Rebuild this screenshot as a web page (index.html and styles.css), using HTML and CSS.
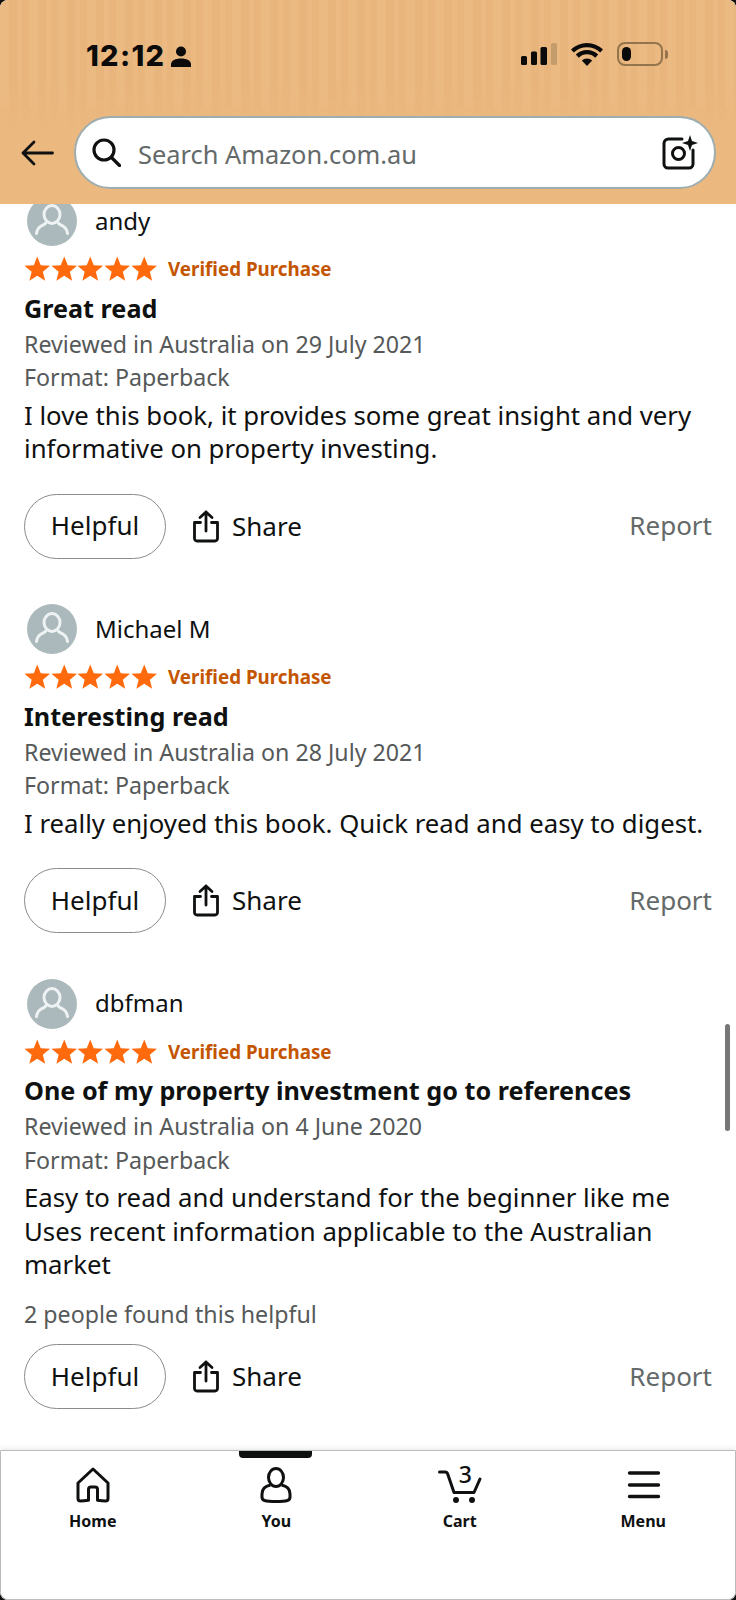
FILE: index.html
```html
<!DOCTYPE html>
<html lang="en">
<head>
    <meta charset="UTF-8">
    <meta name="viewport" content="width=device-width, initial-scale=1.0">
    <title>Customer reviews</title>
    <link rel="stylesheet" href="styles.css">
</head>
<body>
    <svg class="defs" width="0" height="0">
        <symbol id="star" viewBox="0 0 26 26">
            <path d="M13 .5l3.500 8.700 9.300.6-7.200 5.900 2.300 9-7.900-4.900-7.900 4.900 2.300-9L.2 9.800l9.300-.6z"/>
        </symbol>
        <symbol id="avatar" viewBox="0 0 50 50">
            <circle cx="25" cy="25" r="25" fill="#abb9bc"/>
            <g fill="none" stroke="#eef2f2" stroke-width="3" stroke-linecap="round">
                <ellipse cx="25" cy="18.5" rx="8" ry="9"/>
                <path d="M19.500 26c-1 2.500-3.500 3-6 4.500-2.500 1.500-3.500 4-4 7M30.500 26c1 2.500 3.500 3 6 4.500 2.500 1.500 3.500 4 4 7"/>
            </g>
        </symbol>
        <symbol id="share" viewBox="0 0 28 33">
            <g fill="none" stroke="#0f1111" stroke-width="2.800" stroke-linecap="round" stroke-linejoin="round">
                <path d="M14 21V2M8 7.500L14 2l6 5.500"/>
                <path d="M8.500 12.500H2.500v16a2.500 2.500 0 0 0 2.500 2.500h18a2.500 2.500 0 0 0 2.500-2.500v-16h-6"/>
            </g>
        </symbol>
    </svg>

    <div class="phone">
        <header class="top">
            <div class="status">
                <div class="clock">
                    <span class="time">12:12</span>
                    <svg class="person" viewBox="0 0 20 21"><circle cx="10" cy="5.500" r="5"/><path d="M0 21v-2.500C0 14.500 4.500 12.500 10 12.500s10 2 10 6V21z"/></svg>
                </div>
                <div class="indicators">
                    <svg class="signal" viewBox="0 0 36 22">
                        <rect x="0" y="13" width="6" height="9" rx="1.500"/>
                        <rect x="10" y="8.500" width="6" height="13.500" rx="1.500"/>
                        <rect x="19.500" y="4" width="6.500" height="18" rx="1.500"/>
                        <rect class="off" x="30" y="0" width="6" height="22" rx="1.500"/>
                    </svg>
                    <svg class="wifi" viewBox="0 0 32 23">
                        <path d="M16 23l-5.200-5.400a7.400 7.400 0 0 1 10.400 0z"/>
                        <path d="M7.800 14.700l-3-3.100a16 16 0 0 1 22.400 0l-3 3.100a11.700 11.700 0 0 0-16.400 0z"/>
                        <path d="M2.800 9.500L0 6.600a23 23 0 0 1 32 0l-2.800 2.900a19 19 0 0 0-26.400 0z"/>
                    </svg>
                    <div class="battery"><span class="charge"></span></div>
                    <span class="nub"></span>
                </div>
            </div>
            <div class="searchrow">
                <svg class="back" viewBox="0 0 33 26" fill="none" stroke="#0f1111" stroke-width="2.800" stroke-linecap="round" stroke-linejoin="round">
                    <path d="M31.500 13H2M13 2L2 13l11 11"/>
                </svg>
                <div class="searchbar">
                    <svg class="lens" viewBox="0 0 29 29" fill="none" stroke="#0f1111" stroke-width="3.200" stroke-linecap="round">
                        <circle cx="12" cy="12" r="10"/>
                        <path d="M19.500 19.500l8 8"/>
                    </svg>
                    <span class="placeholder">Search Amazon.com.au</span>
                    <svg class="lenscam" viewBox="0 0 36 35">
                        <path d="M20 4H7a4.500 4.500 0 0 0-5 4.500V29a4 4 0 0 0 4 4h21a4 4 0 0 0 4-4V15" fill="none" stroke="#0f1111" stroke-width="3" stroke-linecap="round"/>
                        <circle cx="16.500" cy="18.500" r="6" fill="none" stroke="#0f1111" stroke-width="3"/>
                        <path d="M28 0l2 6 6 2-6 2-2 6-2-6-6-2 6-2z" fill="#0f1111"/>
                    </svg>
                </div>
            </div>
        </header>

        <main class="reviews">
            <article class="review">
                <div class="reviewer">
                    <svg class="avatar"><use href="#avatar"/></svg>
                    <span class="name">andy</span>
                </div>
                <div class="rating">
                    <div class="stars">
                        <svg><use href="#star"/></svg><svg><use href="#star"/></svg><svg><use href="#star"/></svg><svg><use href="#star"/></svg><svg><use href="#star"/></svg>
                    </div>
                    <span class="verified">Verified Purchase</span>
                </div>
                <h3 class="title">Great read</h3>
                <p class="meta">Reviewed in Australia on 29 July 2021</p>
                <p class="meta">Format: Paperback</p>
                <p class="body">I love this book, it provides some great insight and very informative on property investing.</p>
                <div class="actions">
                    <button class="helpful">Helpful</button>
                    <div class="share"><svg><use href="#share"/></svg><span>Share</span></div>
                    <span class="report">Report</span>
                </div>
            </article>

            <article class="review">
                <div class="reviewer">
                    <svg class="avatar"><use href="#avatar"/></svg>
                    <span class="name">Michael M</span>
                </div>
                <div class="rating">
                    <div class="stars">
                        <svg><use href="#star"/></svg><svg><use href="#star"/></svg><svg><use href="#star"/></svg><svg><use href="#star"/></svg><svg><use href="#star"/></svg>
                    </div>
                    <span class="verified">Verified Purchase</span>
                </div>
                <h3 class="title">Interesting read</h3>
                <p class="meta">Reviewed in Australia on 28 July 2021</p>
                <p class="meta">Format: Paperback</p>
                <p class="body">I really enjoyed this book. Quick read and easy to digest.</p>
                <div class="actions">
                    <button class="helpful">Helpful</button>
                    <div class="share"><svg><use href="#share"/></svg><span>Share</span></div>
                    <span class="report">Report</span>
                </div>
            </article>

            <article class="review">
                <div class="reviewer">
                    <svg class="avatar"><use href="#avatar"/></svg>
                    <span class="name">dbfman</span>
                </div>
                <div class="rating">
                    <div class="stars">
                        <svg><use href="#star"/></svg><svg><use href="#star"/></svg><svg><use href="#star"/></svg><svg><use href="#star"/></svg><svg><use href="#star"/></svg>
                    </div>
                    <span class="verified">Verified Purchase</span>
                </div>
                <h3 class="title">One of my property investment go to references</h3>
                <p class="meta">Reviewed in Australia on 4 June 2020</p>
                <p class="meta">Format: Paperback</p>
                <p class="body">Easy to read and understand for the beginner like me<br>Uses recent information applicable to the Australian market</p>
                <p class="meta found">2 people found this helpful</p>
                <div class="actions">
                    <button class="helpful">Helpful</button>
                    <div class="share"><svg><use href="#share"/></svg><span>Share</span></div>
                    <span class="report">Report</span>
                </div>
            </article>

            <div class="scrollbar"></div>
        </main>

        <nav class="tabs">
            <div class="tab">
                <svg viewBox="0 0 36 36" fill="none" stroke="#0f1111" stroke-width="3" stroke-linejoin="round" stroke-linecap="round">
                    <path d="M18 2L3 16v15.500c0 1.500 1 2.500 2.500 2.500 3 0 5-.3 8-.8V22.500c0-1.500 1-2.500 2.500-2.500h4c1.500 0 2.500 1 2.500 2.500v10.700c3 .5 5 .8 8 .8 1.500 0 2.500-1 2.500-2.500V16z"/>
                </svg>
                <span>Home</span>
            </div>
            <div class="tab active">
                <svg viewBox="0 0 36 36" fill="none" stroke="#0f1111" stroke-width="3" stroke-linejoin="round">
                    <ellipse cx="18" cy="10.500" rx="7.500" ry="9"/>
                    <path d="M12.500 18c-5 1-8.500 3.500-8.500 9v3c0 2 .5 3 2.500 3.500 3.500 1 7.500 1 11.500 1s8 0 11.500-1c2-.5 2.500-1.500 2.500-3.500v-3c0-5.500-3.500-8-8.500-9"/>
                </svg>
                <span>You</span>
            </div>
            <div class="tab cart">
                <svg viewBox="0 0 44 36" fill="none" stroke="#0f1111" stroke-width="3" stroke-linecap="round" stroke-linejoin="round">
                    <path d="M1.500 5H7c1.500 0 2.300.7 2.700 2L16 25.500h20L42 12"/>
                    <circle cx="18" cy="33" r="3" fill="#0f1111" stroke="none"/>
                    <circle cx="34" cy="33" r="3" fill="#0f1111" stroke="none"/>
                </svg>
                <b class="count">3</b>
                <span>Cart</span>
            </div>
            <div class="tab">
                <svg viewBox="0 0 36 36" fill="none" stroke="#0f1111" stroke-width="3.400" stroke-linecap="round">
                    <path d="M4.500 6h29M4.500 18h29M4.500 29.500h29"/>
                </svg>
                <span>Menu</span>
            </div>
        </nav>
    </div>
</body>
</html>
```

FILE: styles.css
```css
html {
    background: #111;
}
body {
    margin: 0;
    font-family: "Noto Sans", sans-serif;
    color: #0f1111;
}
.defs {
    position: absolute;
}
.phone {
    width: 736px;
    height: 1600px;
    display: flex;
    flex-direction: column;
    overflow: hidden;
    border-radius: 8px;
    background: #fff;
}

/* header */
.top {
    height: 204px;
    flex: none;
    position: relative;
    z-index: 1;
    background: #ebb87f;
}
.top::before {
    content: "";
    position: absolute;
    left: 0;
    right: 0;
    top: 0;
    height: 130px;
    background: repeating-linear-gradient(90deg, rgba(255, 255, 255, 0.03) 0 9px, rgba(150, 90, 30, 0.03) 9px 17px, rgba(255, 255, 255, 0.015) 17px 22px, rgba(150, 90, 30, 0.025) 22px 29px);
    -webkit-mask-image: linear-gradient(#000 60%, transparent);
    mask-image: linear-gradient(#000 60%, transparent);
}
.status {
    position: relative;
    height: 116px;
    padding: 42px 68px 0 86px;
    box-sizing: border-box;
    display: flex;
    justify-content: space-between;
    align-items: flex-start;
}
.clock {
    display: flex;
    align-items: center;
    gap: 6px;
    height: 24px;
    margin-top: 2px;
}
.time {
    font-family: Inter, sans-serif;
    font-weight: 800;
    font-size: 29px;
    line-height: 24px;
    letter-spacing: 1.300px;
    color: #0b0b0b;
}
.person {
    width: 20px;
    height: 21px;
    fill: #0b0b0b;
}
.indicators {
    display: flex;
    align-items: center;
    height: 24px;
}
.signal {
    width: 36px;
    height: 22px;
    fill: #0b0b0b;
}
.signal .off {
    fill: #c49c6b;
}
.wifi {
    width: 32px;
    height: 23px;
    margin-left: 14px;
    fill: #0b0b0b;
}
.battery {
    width: 46px;
    height: 24px;
    margin-left: 14px;
    box-sizing: border-box;
    border: 2px solid #94744c;
    border-radius: 8px;
    padding: 3px;
    display: flex;
}
.charge {
    width: 9px;
    background: #0b0b0b;
    border-radius: 5px;
}
.nub {
    width: 3px;
    height: 9px;
    margin-left: 2px;
    background: #94744c;
    border-radius: 0 3px 3px 0;
}
.searchrow {
    position: relative;
    display: flex;
    align-items: center;
    height: 73px;
    padding: 0 20px 0 21px;
    gap: 20px;
}
.back {
    width: 33px;
    height: 26px;
    flex: none;
}
.searchbar {
    flex: 1;
    height: 73px;
    box-sizing: border-box;
    border: 2px solid #9dadb0;
    border-radius: 37px;
    background: #fff;
    display: flex;
    align-items: center;
    padding: 0 16px 0 16px;
}
.lens {
    width: 29px;
    height: 29px;
    flex: none;
}
.placeholder {
    margin-left: 17px;
    flex: 1;
    padding-top: 3px;
    font-size: 25.400px;
    color: #646969;
}
.lenscam {
    width: 36px;
    height: 35px;
    flex: none;
}

/* reviews */
.reviews {
    flex: 1;
    position: relative;
    overflow: hidden;
    padding: 0 24px;
}
.review {
    margin-bottom: 45.500px;
}
.review:first-child {
    margin-top: -8px;
}
.reviewer {
    display: flex;
    align-items: center;
    gap: 18px;
    height: 50px;
    padding-left: 3px;
}
.avatar {
    width: 50px;
    height: 50px;
}
.name {
    font-size: 24px;
    padding-bottom: 2px;
}
.rating {
    display: flex;
    align-items: center;
    height: 26px;
    margin-top: 10px;
}
.stars {
    display: flex;
    width: 133px;
    justify-content: space-between;
}
.stars svg {
    width: 26.500px;
    height: 26px;
    fill: #ff6a0d;
}
.verified {
    margin-left: 11px;
    font-size: 18.800px;
    font-weight: 700;
    color: #c45500;
}
.title {
    margin: 6.500px 0 0;
    font-size: 25.200px;
    line-height: 39px;
    font-weight: 700;
}
.meta {
    margin: 0;
    font-size: 23.200px;
    line-height: 33.500px;
    color: #565959;
}
.body {
    margin: 4px 0 0;
    font-size: 25.750px;
    line-height: 33.500px;
}
.found {
    margin-top: 16px;
}
.actions {
    display: flex;
    align-items: center;
    margin-top: 28px;
}
.found + .actions {
    margin-top: 13px;
}
.helpful {
    width: 142px;
    height: 65px;
    border: 1.500px solid #888c8c;
    border-radius: 33px;
    background: #fff;
    font: 26px "Noto Sans", sans-serif;
    color: #0f1111;
    padding: 0 0 2px;
}
.share {
    display: flex;
    align-items: center;
    gap: 12px;
    margin-left: 26px;
    font-size: 26px;
}
.share span {
    padding-bottom: 1px;
}
.share svg {
    width: 28px;
    height: 33px;
}
.report {
    margin-left: auto;
    padding-bottom: 2px;
    font-size: 26px;
    color: #646969;
}
.scrollbar {
    position: absolute;
    left: 725px;
    top: 820px;
    width: 5px;
    height: 107px;
    border-radius: 3px;
    background: #777;
}

/* bottom tabs */
.tabs {
    flex: none;
    height: 150px;
    box-sizing: border-box;
    border: 1.500px solid #b9bdbd;
    border-radius: 0 0 8px 8px;
    box-shadow: 0 -2px 5px rgba(0, 0, 0, 0.08);
    background: #fff;
    display: grid;
    grid-template-columns: repeat(4, 1fr);
    position: relative;
}
.tab {
    position: relative;
    display: flex;
    flex-direction: column;
    align-items: center;
    padding-top: 16px;
    font-size: 16px;
    font-weight: 700;
}
.tab svg {
    height: 36px;
    width: 36px;
}
.tab span {
    margin-top: 7px;
    line-height: 22px;
}
.tab.cart svg {
    width: 44px;
}
.count {
    position: absolute;
    top: 11px;
    left: 50%;
    margin-left: -1px;
    font-size: 23px;
    font-weight: 500;
    line-height: 24px;
}
.tab.active::before {
    content: "";
    position: absolute;
    top: 0;
    left: 54.500px;
    width: 73px;
    height: 7px;
    background: #0f1111;
    border-radius: 0 0 4px 4px;
}
```
